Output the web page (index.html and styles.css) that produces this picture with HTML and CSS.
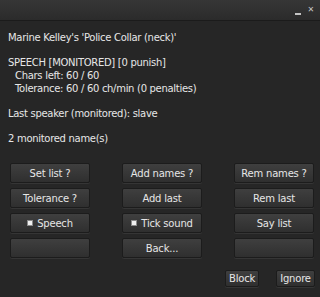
FILE: index.html
```html
<!DOCTYPE html>
<html lang="en">
<head>
  <meta charset="UTF-8" />
  <title>Police Collar</title>
  <link rel="stylesheet" href="styles.css">
</head>
<body>
  <div class="window">
    <div class="titlebar">
      <span class="tb-min"></span>
      <span class="tb-close">&#x2715;</span>
    </div>
    <div class="content">
      <p class="line">Marine Kelley's 'Police Collar (neck)'</p>
      <p class="line gap">SPEECH [MONITORED] [0 punish]</p>
      <p class="line indent">Chars left: 60 / 60</p>
      <p class="line indent">Tolerance: 60 / 60 ch/min (0 penalties)</p>
      <p class="line gap">Last speaker (monitored): slave</p>
      <p class="line gap">2 monitored name(s)</p>

      <div class="grid">
        <button class="btn">Set list ?</button>
        <button class="btn">Add names ?</button>
        <button class="btn">Rem names ?</button>
        <button class="btn">Tolerance ?</button>
        <button class="btn">Add last</button>
        <button class="btn">Rem last</button>
        <button class="btn"><span class="box"></span>Speech</button>
        <button class="btn"><span class="box"></span>Tick sound</button>
        <button class="btn">Say list</button>
        <button class="btn"></button>
        <button class="btn">Back...</button>
        <button class="btn"></button>
      </div>

      <div class="actions">
        <button class="btn small block">Block</button>
        <button class="btn small ignore">Ignore</button>
      </div>
    </div>
  </div>
</body>
</html>
```

FILE: styles.css
```css
body {
  margin: 0;
  background: #262626;
  font-family: 'DejaVu Sans', sans-serif;
  font-size: 10px;
  letter-spacing: -0.3px;
  color: #e6e6e6;
}
.window {
  width: 320px;
  height: 297px;
  background: #262626;
  overflow: hidden;
}
.titlebar {
  height: 20px;
  background: linear-gradient(#363636, #2b2b2b);
  border-bottom: 1px solid #1b1b1b;
  display: flex;
  justify-content: flex-end;
  align-items: center;
  padding-right: 6px;
  gap: 7px;
}
.tb-min {
  width: 6px;
  height: 2px;
  background: #c4c4c4;
  margin-top: 8px;
}
.tb-close {
  color: #c4c4c4;
  font-size: 8px;
  font-weight: bold;
  margin-top: -2px;
}
.content {
  padding: 10px 0 0 8px;
}
.line {
  margin: 0;
  line-height: 13px;
  height: 13px;
  white-space: pre;
}
.line.gap {
  margin-top: 12px;
}
.line.indent {
  padding-left: 7px;
}
.grid {
  display: grid;
  grid-template-columns: repeat(3, 80px);
  grid-auto-rows: 20px;
  column-gap: 32px;
  row-gap: 5px;
  margin: 18px 0 0 2px;
}
.btn {
  font-family: 'DejaVu Sans', sans-serif;
  font-size: 10px;
  letter-spacing: -0.2px;
  color: #e6e6e6;
  background: linear-gradient(#3f3f3f, #2f2f2f);
  border: 1px solid #1c1c1c;
  border-radius: 2px;
  box-shadow: 0 1px 0 #353535;
  padding: 0;
  display: flex;
  align-items: center;
  justify-content: center;
}
.box {
  display: inline-block;
  width: 4px;
  height: 4px;
  background: #f0f0f0;
  border: 1px solid #8a8a8a;
  margin-right: 4px;
}
.actions {
  display: flex;
  justify-content: flex-end;
  gap: 17px;
  margin: 12px 5px 0 0;
}
.btn.small {
  height: 17px;
}
.block {
  width: 34px;
}
.ignore {
  width: 39px;
}
```
